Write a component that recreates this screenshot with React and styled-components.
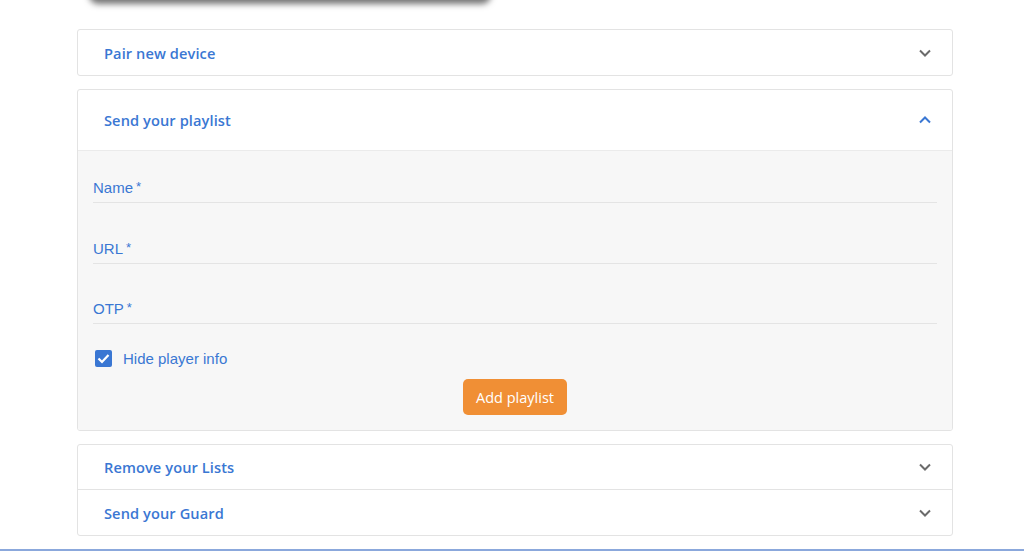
import React from "react";
import styled, { createGlobalStyle } from "styled-components";

const Global = createGlobalStyle`
  html, body { margin: 0; padding: 0; background: #fff; }
  body { font-family: "Liberation Sans", Arial, sans-serif; }
  * { box-sizing: border-box; }
`;

const BLUE = "#3a77d3";

const Page = styled.div`
  width: 1024px;
  height: 551px;
  overflow: hidden;
  position: relative;
  background: #fff;
  display: flex;
  flex-direction: column;
`;

const TopCard = styled.div`
  margin: -30px 0 0 90px;
  width: 400px;
  height: 30px;
  background: #fff;
  border-radius: 0 0 8px 8px;
  box-shadow: 0 3px 6px 1px rgba(0,0,0,0.55);
  flex-shrink: 0;
`;

const Stack = styled.div`
  margin: 29px 0 0 77px;
  width: 876px;
  display: flex;
  flex-direction: column;
  gap: 13px;
`;

const Panel = styled.div`
  border: 1px solid #e3e3e3;
  border-radius: 3px;
  background: #fff;
  overflow: hidden;
`;

const Header = styled.div`
  height: ${p => p.$h}px;
  display: flex;
  align-items: center;
  justify-content: space-between;
  padding: 0 20px 0 26px;
  border-top: ${p => (p.$divider ? "1px solid #e3e3e3" : "none")};
  border-bottom: ${p => (p.$open ? "1px solid #ebebeb" : "none")};
`;

const Title = styled.span`
  font-family: "Open Sans", "DejaVu Sans", sans-serif;
  font-weight: 600;
  font-size: 14.6px;
  letter-spacing: 0.1px;
  color: ${BLUE};
`;

const Chevron = ({ up }) => (
  <svg width="14" height="10" viewBox="0 0 14 10" style={{ display: "block" }}>
    <path
      d={up ? "M2 7.5 L7 2.5 L12 7.5" : "M2 2.5 L7 7.5 L12 2.5"}
      fill="none"
      stroke={up ? BLUE : "#6b6b6b"}
      strokeWidth="2"
    />
  </svg>
);

const Body = styled.div`
  background: #f7f7f7;
  padding: 16px 15px 15px 15px;
  display: flex;
  flex-direction: column;
`;

const Field = styled.div`
  height: 60.5px;
  display: flex;
  flex-direction: column;
  justify-content: flex-end;
  border-bottom: 1px solid #e4e4e4;
  padding-bottom: 4px;
  &:first-child { height: 36px; }
`;

const Label = styled.label`
  font-size: 15px;
  color: ${BLUE};
  line-height: 18px;
  span { margin-left: 3px; font-size: 13px; position: relative; top: -2px; }
`;

const CheckRow = styled.label`
  display: flex;
  align-items: center;
  gap: 11px;
  margin-top: 26px;
  padding-left: 2px;
  font-size: 15px;
  color: ${BLUE};
`;

const Box = styled.span`
  width: 17px;
  height: 17px;
  border-radius: 2px;
  background: ${BLUE};
  display: flex;
  align-items: center;
  justify-content: center;
`;

const ButtonRow = styled.div`
  display: flex;
  justify-content: center;
  margin-top: 12px;
`;

const Button = styled.button`
  width: 104px;
  height: 36px;
  border: none;
  border-radius: 5px;
  background: #f08f35;
  color: #fff;
  font-family: "Open Sans", "DejaVu Sans", sans-serif;
  font-size: 14.5px;
  cursor: pointer;
`;

const BottomLine = styled.div`
  position: absolute;
  left: 0;
  right: 0;
  bottom: 0;
  height: 2px;
  background: #8ba8dc;
`;

export default function App() {
  return (
    <Page>
      <Global />
      <TopCard />
      <Stack>
        <Panel>
          <Header $h={45}>
            <Title>Pair new device</Title>
            <Chevron />
          </Header>
        </Panel>
        <Panel>
          <Header $h={61} $open>
            <Title>Send your playlist</Title>
            <Chevron up />
          </Header>
          <Body>
            <Field><Label>Name<span>*</span></Label></Field>
            <Field><Label>URL<span>*</span></Label></Field>
            <Field><Label>OTP<span>*</span></Label></Field>
            <CheckRow>
              <Box>
                <svg width="13" height="11" viewBox="0 0 13 11">
                  <path d="M1.5 5.5 L5 9 L11.5 2" fill="none" stroke="#fff" strokeWidth="2.2" />
                </svg>
              </Box>
              Hide player info
            </CheckRow>
            <ButtonRow>
              <Button>Add playlist</Button>
            </ButtonRow>
          </Body>
        </Panel>
        <Panel>
          <Header $h={44}>
            <Title>Remove your Lists</Title>
            <Chevron />
          </Header>
          <Header $h={46} $divider>
            <Title>Send your Guard</Title>
            <Chevron />
          </Header>
        </Panel>
      </Stack>
      <BottomLine />
    </Page>
  );
}
